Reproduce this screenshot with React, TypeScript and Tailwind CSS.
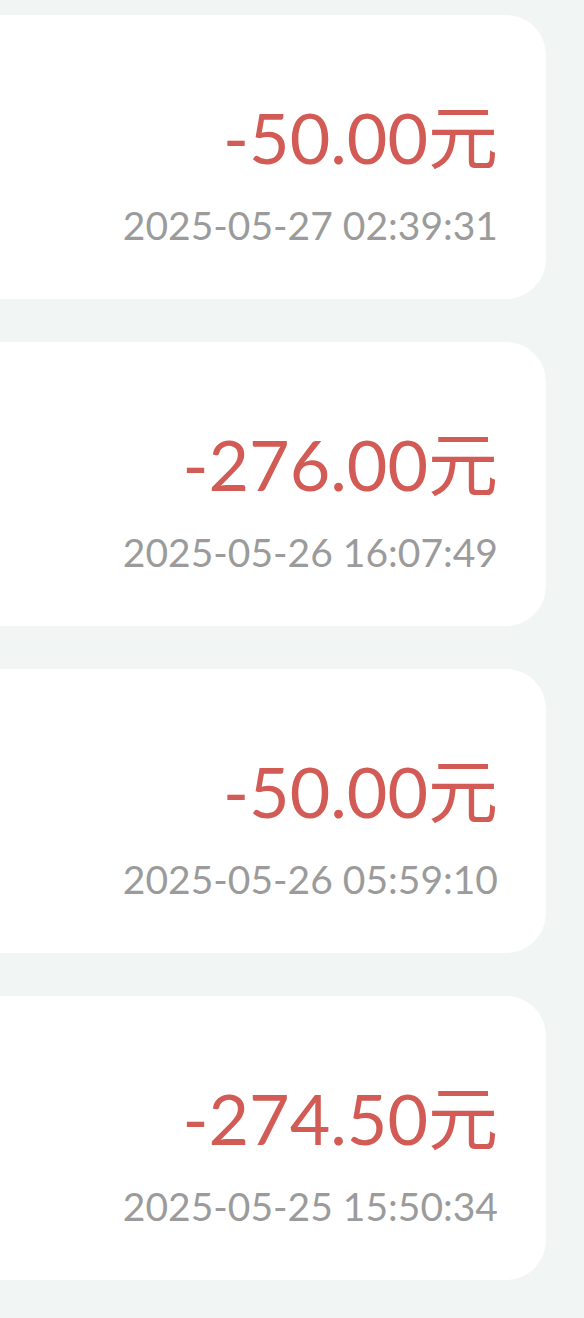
const records = [
  { amount: '-50.00', time: '2025-05-27 02:39:31' },
  { amount: '-276.00', time: '2025-05-26 16:07:49' },
  { amount: '-50.00', time: '2025-05-26 05:59:10' },
  { amount: '-274.50', time: '2025-05-25 15:50:34' },
];

function RecordCard({ amount, time }: { amount: string; time: string }) {
  return (
    <div className="h-[284px] w-[546px] rounded-r-[40px] bg-white pr-[48px] pt-[87px] flex flex-col items-end">
      <div className="text-[70px] leading-[70px] text-[#d25b55] whitespace-nowrap">
        {amount}元
      </div>
      <div className="mt-[34px] text-[39px] leading-[39px] text-[#9b9b9b] whitespace-nowrap">
        {time}
      </div>
    </div>
  );
}

export default function App() {
  return (
    <div
      className="min-h-[1318px] w-[584px] bg-[#f1f5f4] pt-[15px] flex flex-col gap-[43px]"
      style={{ fontFamily: "Lato, 'Noto Sans CJK SC', sans-serif" }}
    >
      {records.map((r, i) => (
        <RecordCard key={i} amount={r.amount} time={r.time} />
      ))}
    </div>
  );
}
